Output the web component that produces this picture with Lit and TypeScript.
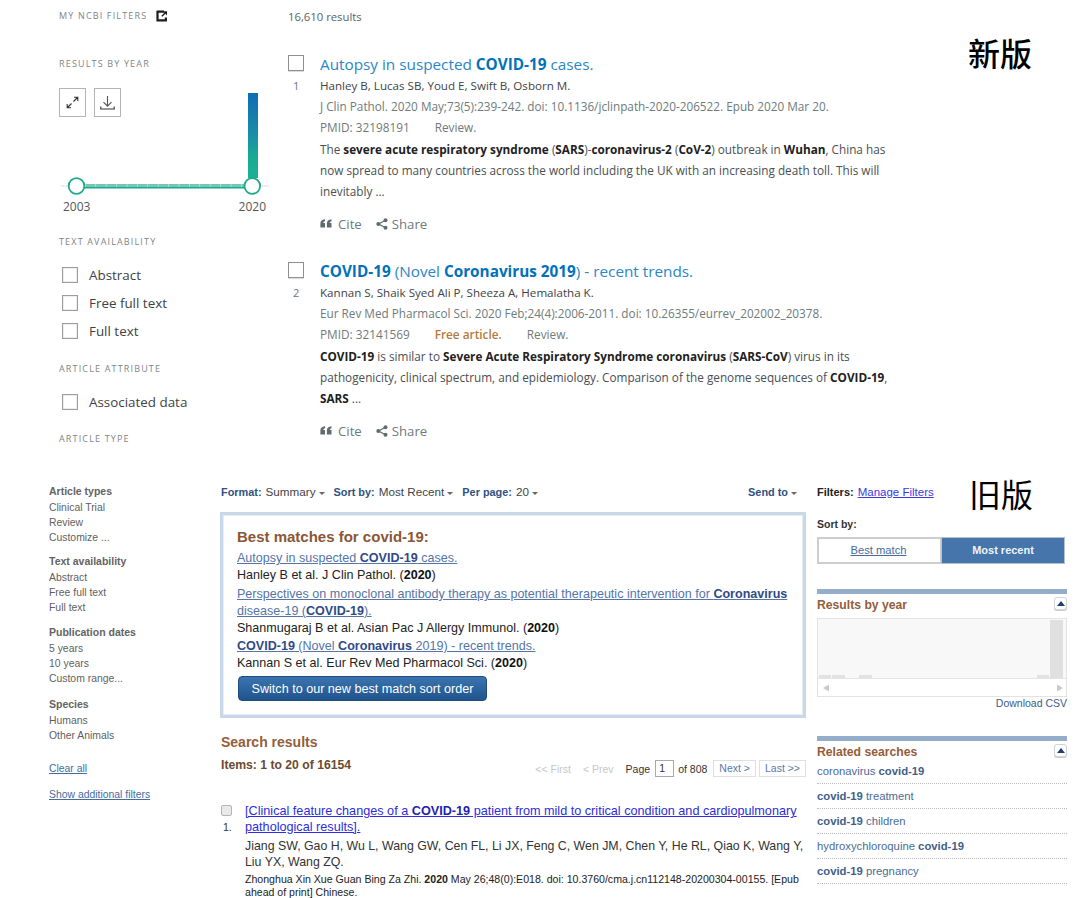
import { LitElement, html, css, svg } from "lit";
import { customElement } from "lit/decorators.js";

const extIcon = html`<svg class="ext" width="12" height="12" viewBox="0 0 12 12"><path d="M1 0.5h7v2.2H3a.4.4 0 0 0-.4.4v6.1h6.2V7.6H11V11a.6.6 0 0 1-.6.6H1a.6.6 0 0 1-.6-.6V1.1A.6.6 0 0 1 1 .5z" fill="#1c1c1c"/><path d="M5 8l3-3-1.6-1.600h4.200V7.600L9 6 6 9z" fill="#1c1c1c" transform="translate(.4 -2.200)"/></svg>`;
const expandIcon = html`<svg width="13" height="13" viewBox="0 0 13 13"><path d="M7.500 5.500L11.500 1.500M8 1.200h3.800V5M5.500 7.500L1.500 11.500M1.200 8v3.800H5" fill="none" stroke="#333" stroke-width="1.100"/></svg>`;
const dlIcon = html`<svg width="15" height="16" viewBox="0 0 15 16"><path d="M7.500 1v10M3.500 7.200l4 4 4-4" fill="none" stroke="#555" stroke-width="1.100"/><path d="M.8 11.500v2.500h13.400v-2.500" fill="none" stroke="#333" stroke-width="1.100"/></svg>`;
const quoteIcon = html`<svg width="12" height="9" viewBox="0 0 12 9"><path d="M5 .3v2C3.800 2.600 3.300 3.200 3.200 4H5v4.500H.4V4.600C.4 2 2 .6 5 .3zM11.500.3v2c-1.200.3-1.700.9-1.800 1.700h1.800v4.500H6.900V4.600C6.900 2 8.500.6 11.500.3z" fill="#5f6b6f"/></svg>`;
const shareIcon = html`<svg width="12" height="12" viewBox="0 0 12 12"><path d="M9.500 2.300L2.500 6l7 3.700" fill="none" stroke="#5f6b6f" stroke-width="1.200"/><circle cx="9.500" cy="2.300" r="2" fill="#5f6b6f"/><circle cx="2.300" cy="6" r="2" fill="#5f6b6f"/><circle cx="9.500" cy="9.700" r="2" fill="#5f6b6f"/></svg>`;

const toggle = html`<span class="toggle"><svg width="8" height="5" viewBox="0 0 8 5"><path d="M0 5L4 0l4 5z" fill="#1f3f73"/></svg></span>`;

const caret = html`<span class="caret"></span>`;

const ticks = Array.from({ length: 17 }, (_, i) => 26 + i * 10.4);

@customElement("app-root")
export class AppRoot extends LitElement {
  static styles = css`
    :host { display: block; width: 1080px; height: 898px; overflow: hidden; background: #fff; }
    * { box-sizing: border-box; }
    a { text-decoration: none; color: inherit; }
    .new { display: flex; height: 460px; font-family: "Open Sans", sans-serif; color: #3d4346; }
    .side { width: 288px; padding-left: 59px; flex: none; }
    .cap { font-size: 9px; letter-spacing: 1.16px; color: #7f8487; height: 20px; line-height: 22px; text-transform: uppercase; white-space: nowrap; }
    .cap.first { height: 30px; line-height: 32px; padding-top: 1px; display: flex; align-items: center; gap: 9px; }
    .cap.y { margin-top: 23px; }
    .chart { position: relative; margin-top: 15px; width: 215px; height: 109px; }
    .chart-svg { position: absolute; left: 0; top: 0; }
    .btns { display: flex; gap: 8px; position: relative; }
    .ibtn { width: 27px; height: 29px; border: 1px solid #b4b4b4; background: #fff; display: flex; align-items: center; justify-content: center; }
    .yrs { display: flex; justify-content: space-between; width: 207px; padding-left: 4px; font-size: 12px; line-height: 20px; height: 20px; color: #555; }
    .cap.ta { margin-top: 14px; }
    .cap.g { margin-top: 13px; }
    .cap.at { margin-top: 12px; }
    .chk { display: flex; align-items: center; height: 28px; padding-left: 3px; font-size: 13.400px; color: #3e4244; white-space: nowrap; }
    .chk.lead { margin-top: 10px; }
    .box { width: 16px; height: 16px; border: 1px solid #9d9d9d; background: #fff; flex: none; margin-right: 11px; box-shadow: inset 0 0 0 .5px #ddd; }
    .main { width: 680px; flex: none; }
    .count { height: 34px; line-height: 34px; font-size: 11.300px; color: #5d6265; }
    .art { display: flex; margin-top: 25px; }
    .art.f { margin-top: 18px; }
    .gut { width: 32px; flex: none; position: relative; }
    .abox { width: 16px; height: 16px; border: 1px solid #8f8f8f; margin-top: 3px; margin-bottom: 7px; box-shadow: 0 1px 0 #ddd; }
    .num { font-size: 11px; text-align: left; padding-left: 5px; line-height: 16px; color: #6a7680; }
    .title { height: 23px; line-height: 25px; font-size: 15.300px; color: #2a86c8; white-space: nowrap; }
    .title b { color: #0071bc; font-weight: 700; }
    .line { height: 21px; line-height: 21px; font-size: 11.750px; white-space: nowrap; color: #4a4f52; }
    .auth { font-size: 11.600px; color: #3f4345; }
    .cit { color: #6d7b7c; }
    .meta { display: flex; gap: 25px; color: #717a79; font-size: 11.800px; }
    .free { color: #b57a3b; font-weight: 600; }
    .snip { line-height: 22px; }
    .snip b { color: #212121; font-weight: 700; }
    .acts { display: flex; align-items: center; height: 21px; margin-top: 12px; font-size: 13.200px; color: #6f797b; }
    .acts span { display: flex; align-items: center; gap: 6px; }
    .acts span + span { margin-left: 14px; gap: 4px; }
    .tag { font-family: "Noto Sans CJK SC", sans-serif; font-size: 32px; color: #000; line-height: 1; white-space: nowrap; }
    .tag.a { padding-top: 36px; font-weight: 500; }

    .old { display: flex; height: 438px; font-family: "Liberation Sans", Arial, sans-serif; font-size: 11.500px; color: #333; padding-left: 49px; padding-top: 23px; }
    .fil { width: 172px; flex: none; color: #5f5f5f; font-size: 10.400px; }
    .fh { font-weight: 700; height: 17px; line-height: 16px; color: #636363; font-size: 10.500px; }
    .fi { height: 15px; line-height: 15px; }
    .fg:nth-child(2) { margin-top: 8px; }
    .fg:nth-child(3) { margin-top: 9px; }
    .fg:nth-child(4) { margin-top: 10px; }
    .lnk { height: 16px; line-height: 16px; color: #456c9e; text-decoration: underline; }
    .lnk.c { margin-top: 18px; }
    .lnk.s { margin-top: 10px; }
    .mid { width: 585px; flex: none; }
    .bar { display: flex; height: 18px; line-height: 18px; font-size: 11.700px; color: #444; white-space: nowrap; }
    .bar b { color: #2f5283; font-weight: 700; font-size: 10.900px; }
    .bar .o { margin-right: 9px; display: flex; align-items: center; }
    .bar .o b { margin-right: 4px; }
    .bar .send { margin-left: auto; margin-right: 9px; display: flex; align-items: center; }
    .caret { display: inline-block; width: 0; height: 0; border-left: 3.500px solid transparent; border-right: 3.500px solid transparent; border-top: 3.500px solid #666; margin-left: 3px; margin-top: 2px; }
    .best { margin: 11px 0 0 -1px; width: 586px; height: 206px; border: 3px solid #c9d8e8; padding: 13px 14px 0; background: #fff; box-shadow: inset 0 0 0 1px #e6edf5; color: #222; font-size: 12.550px; }
    .best h3 { margin: 0; font-size: 15px; line-height: 18px; height: 18px; color: #8a5634; font-weight: 700; }
    .row { height: 17px; line-height: 17px; white-space: nowrap; }
    .row b { font-weight: 700; color: #111; }
    .blink { color: #5574a8; text-decoration: underline; }
    .blink b { color: #2f4a86; }
    .e1 { margin-top: 4px; }
    .e2 { margin-top: 2px; }
    .e3 { margin-top: 1px; }
    .sw { display: block; margin: 4px 0 0 1px; width: 249px; height: 25px; border-radius: 4px; border: 1px solid #1f4b7f; background: linear-gradient(#3a74ae, #20548e); color: #fff; font: 12.600px/24px "Liberation Sans", Arial, sans-serif; padding: 0; text-align: center; }
    .sr { margin-top: 16px; height: 16px; line-height: 16px; font-size: 14px; font-weight: 700; color: #935e3d; }
    .pg { display: flex; justify-content: space-between; margin-top: 7px; height: 20px; }
    .items { font-weight: 700; font-size: 12.200px; color: #6b4a30; line-height: 17px; height: 16px; }
    .pgr { display: flex; align-items: center; font-size: 10.500px; margin-top: 3px; height: 17px; color: #333; white-space: nowrap; }
    .dis { color: #c6c6c6; }
    .d1 { margin-right: 12px; }
    .d2 { margin-right: 12px; }
    .of { margin-right: 6px; }
    .pbtn { border: 1px solid #e0e0e0; height: 17px; line-height: 15px; padding: 0 5px; color: #5a7aa6; }
    .pbtn.n { margin-right: 3px; }
    .pin { width: 19px; height: 17px; border: 1px solid #aaa; padding-left: 3px; line-height: 15px; margin: 0 4px 0 5px; color: #333; background: #fff; }
    .res { display: flex; margin-top: 26px; }
    .rg { width: 24px; flex: none; }
    .rc { width: 11px; height: 11px; border: 1px solid #b5b5b5; border-radius: 2px; background: #e9e9e9; margin-top: 2px; margin-bottom: 4px; }
    .rn { font-size: 10.500px; padding-left: 2px; line-height: 14px; margin-top: 3px; color: #333; }
    .rt { color: #2c2ce0; text-decoration: underline; font-size: 12.670px; line-height: 16px; white-space: nowrap; }
    .rt b { font-weight: 700; color: #1f1fb0; }
    .ra { margin-top: 3px; line-height: 16px; font-size: 12.350px; color: #333; white-space: nowrap; }
    .rj { margin-top: 3px; line-height: 13px; font-size: 10.580px; color: #222; white-space: nowrap; }
    .rj b { font-weight: 700; }
    .right { width: 250px; flex: none; margin-left: 11px; position: relative; }
    .ftop { height: 18px; line-height: 18px; font-size: 11px; display: flex; gap: 4px; white-space: nowrap; }
    .ftop b { font-weight: 700; color: #222; }
    .ftop a { color: #3a3ae0; text-decoration: underline; font-size: 11.500px; }
    .tag.b { position: absolute; left: 152px; top: -6px; font-weight: 400; }
    .sortl { margin-top: 15px; height: 16px; line-height: 16px; font-weight: 700; font-size: 10.500px; color: #333; }
    .seg { display: flex; margin-top: 5px; width: 248px; height: 27px; font-size: 11.200px; line-height: 23px; text-align: center; }
    .seg div { border: 2px solid #cdcdcd; }
    .seg .l { width: 124px; padding-right: 2px; color: #456c9e; text-decoration: underline; background: #fff; border-right: 1px solid #cdcdcd; }
    .seg .r { flex: 1; background: #4575aa; color: #eef3f8; font-weight: 700; border-color: #b8c2cc; border-width: 1px; line-height: 25px; font-size: 11px; }
    .rule { height: 5px; background: #93adca; }
    .rule.a { margin-top: 25px; }
    .rule.c { margin-top: 25px; }
    .pt { display: flex; justify-content: space-between; height: 16px; line-height: 17px; font-weight: 700; font-size: 12.200px; color: #955c38; margin-top: 3px; }
    .toggle { width: 13px; height: 13px; border: 1px solid #d4d4d4; border-radius: 3px; background: #fff; display: flex; align-items: center; justify-content: center; box-shadow: 0 1px 0 #ccc; }
    .plot { margin-top: 5px; width: 250px; height: 79px; border: 1px solid #e3e3e3; display: block; }
    .csv { height: 14px; line-height: 13px; text-align: right; font-size: 10.500px; color: #3a5d86; }
    .rs { height: 25px; padding-bottom: 2px; border-bottom: 1px dotted #bbb; line-height: 24px; font-size: 11.300px; color: #4b6c97; white-space: nowrap; }
    .rs b { font-weight: 700; color: #3f5f8a; }
    .rsw { margin-top: -1px; }
  `;

  private chk(t: string, lead = false) {
    return html`<div class="chk ${lead ? "lead" : ""}"><span class="box"></span>${t}</div>`;
  }

  private group(h: string, items: string[]) {
    return html`<div class="fg"><div class="fh">${h}</div>${items.map((i) => html`<div class="fi">${i}</div>`)}</div>`;
  }

  render() {
    const plotBars = [[1, 12], [14, 13], [41, 13], [219, 12]];
    return html`
      <section class="new">
        <aside class="side">
          <div class="cap first">My NCBI Filters ${extIcon}</div>
          <div class="cap y">Results by year</div>
          <div class="chart">
            <svg class="chart-svg" width="215" height="109" viewBox="0 0 215 109">
              <defs><linearGradient id="g" x1="0" x2="0" y1="0" y2="1"><stop offset="0" stop-color="#0f6cb4"/><stop offset=".5" stop-color="#1b8ea6"/><stop offset=".75" stop-color="#18ab93"/><stop offset="1" stop-color="#1cb193"/></linearGradient></defs>
              <rect x="189" y="5" width="10" height="85" fill="url(#g)"/>
              <rect x="2" y="97.500" width="208" height="1" fill="#ddd"/>
              <rect x="17" y="96" width="177" height="3" fill="#72c9b3"/>
              <rect x="17" y="99" width="177" height="1.500" fill="#1fa88b"/>
              ${ticks.map((x) => svg`<rect x=${x} y="96" width=".7" height="3" fill="#bfe6dc"/>`)}
              <circle cx="17.500" cy="98" r="7.800" fill="#fff" stroke="#1fa88b" stroke-width="1.800"/>
              <circle cx="193.300" cy="98" r="7.800" fill="#fff" stroke="#1fa88b" stroke-width="1.800"/>
            </svg>
            <div class="btns"><span class="ibtn">${expandIcon}</span><span class="ibtn">${dlIcon}</span></div>
          </div>
          <div class="yrs"><span>2003</span><span>2020</span></div>
          <div class="cap ta">Text availability</div>
          ${this.chk("Abstract", true)}${this.chk("Free full text")}${this.chk("Full text")}
          <div class="cap g">Article attribute</div>
          ${this.chk("Associated data", true)}
          <div class="cap at">Article type</div>
        </aside>
        <div class="main">
          <div class="count">16,610 results</div>
          <article class="art f">
            <div class="gut"><div class="abox"></div><div class="num">1</div></div>
            <div>
              <div class="title">Autopsy in suspected <b>COVID-19</b> cases.</div>
              <div class="line auth">Hanley B, Lucas SB, Youd E, Swift B, Osborn M.</div>
              <div class="line cit">J Clin Pathol. 2020 May;73(5):239-242. doi: 10.1136/jclinpath-2020-206522. Epub 2020 Mar 20.</div>
              <div class="line meta"><span>PMID: 32198191</span><span>Review.</span></div>
              <div class="line snip">The <b>severe acute respiratory syndrome</b> (<b>SARS</b>)-<b>coronavirus-2</b> (<b>CoV-2</b>) outbreak in <b>Wuhan</b>, China has</div>
              <div class="line snip">now spread to many countries across the world including the UK with an increasing death toll. This will</div>
              <div class="line snip">inevitably ...</div>
              <div class="acts"><span>${quoteIcon} Cite</span><span>${shareIcon} Share</span></div>
            </div>
          </article>
          <article class="art">
            <div class="gut"><div class="abox"></div><div class="num">2</div></div>
            <div>
              <div class="title"><b>COVID-19</b> (Novel <b>Coronavirus 2019</b>) - recent trends.</div>
              <div class="line auth">Kannan S, Shaik Syed Ali P, Sheeza A, Hemalatha K.</div>
              <div class="line cit">Eur Rev Med Pharmacol Sci. 2020 Feb;24(4):2006-2011. doi: 10.26355/eurrev_202002_20378.</div>
              <div class="line meta"><span>PMID: 32141569</span><span class="free">Free article.</span><span>Review.</span></div>
              <div class="line snip"><b>COVID-19</b> is similar to <b>Severe Acute Respiratory Syndrome coronavirus</b> (<b>SARS-CoV</b>) virus in its</div>
              <div class="line snip">pathogenicity, clinical spectrum, and epidemiology. Comparison of the genome sequences of <b>COVID-19</b>,</div>
              <div class="line snip"><b>SARS</b> ...</div>
              <div class="acts"><span>${quoteIcon} Cite</span><span>${shareIcon} Share</span></div>
            </div>
          </article>
        </div>
        <div class="tag a">新版</div>
      </section>
      <section class="old">
        <aside class="fil">
          ${this.group("Article types", ["Clinical Trial", "Review", "Customize ..."])}
          ${this.group("Text availability", ["Abstract", "Free full text", "Full text"])}
          ${this.group("Publication dates", ["5 years", "10 years", "Custom range..."])}
          ${this.group("Species", ["Humans", "Other Animals"])}
          <div class="lnk c">Clear all</div>
          <div class="lnk s">Show additional filters</div>
        </aside>
        <div class="mid">
          <div class="bar">
            <span class="o"><b>Format:</b> Summary ${caret}</span>
            <span class="o"><b>Sort by:</b> Most Recent ${caret}</span>
            <span class="o"><b>Per page:</b> 20 ${caret}</span>
            <span class="send"><b>Send to</b> ${caret}</span>
          </div>
          <div class="best">
            <h3>Best matches for covid-19:</h3>
            <div class="e1">
              <div class="row blink">Autopsy in suspected <b>COVID-19</b> cases.</div>
              <div class="row">Hanley B et al. J Clin Pathol. (<b>2020</b>)</div>
            </div>
            <div class="e2">
              <div class="row blink">Perspectives on monoclonal antibody therapy as potential therapeutic intervention for <b>Coronavirus</b></div>
              <div class="row blink">disease-19 (<b>COVID-19</b>).</div>
              <div class="row">Shanmugaraj B et al. Asian Pac J Allergy Immunol. (<b>2020</b>)</div>
            </div>
            <div class="e3">
              <div class="row blink"><b>COVID-19</b> (Novel <b>Coronavirus</b> 2019) - recent trends.</div>
              <div class="row">Kannan S et al. Eur Rev Med Pharmacol Sci. (<b>2020</b>)</div>
            </div>
            <button class="sw">Switch to our new best match sort order</button>
          </div>
          <div class="sr">Search results</div>
          <div class="pg">
            <div class="items">Items: 1 to 20 of 16154</div>
            <div class="pgr">
              <span class="dis d1">&lt;&lt; First</span>
              <span class="dis d2">&lt; Prev</span>
              <span>Page</span><span class="pin">1</span><span class="of">of 808</span>
              <span class="pbtn n">Next &gt;</span><span class="pbtn">Last &gt;&gt;</span>
            </div>
          </div>
          <div class="res">
            <div class="rg"><div class="rc"></div><div class="rn">1.</div></div>
            <div>
              <div class="rt">[Clinical feature changes of a <b>COVID-19</b> patient from mild to critical condition and cardiopulmonary</div>
              <div class="rt">pathological results].</div>
              <div class="ra">Jiang SW, Gao H, Wu L, Wang GW, Cen FL, Li JX, Feng C, Wen JM, Chen Y, He RL, Qiao K, Wang Y,<br />Liu YX, Wang ZQ.</div>
              <div class="rj">Zhonghua Xin Xue Guan Bing Za Zhi. <b>2020</b> May 26;48(0):E018. doi: 10.3760/cma.j.cn112148-20200304-00155. [Epub<br />ahead of print] Chinese.</div>
            </div>
          </div>
        </div>
        <aside class="right">
          <div class="ftop"><b>Filters:</b> <a>Manage Filters</a></div>
          <div class="tag b">旧版</div>
          <div class="sortl">Sort by:</div>
          <div class="seg"><div class="l">Best match</div><div class="r">Most recent</div></div>
          <div class="rule a"></div>
          <div class="pt"><span>Results by year</span>${toggle}</div>
          <svg class="plot" width="250" height="79" viewBox="0 0 248 77">
            <rect width="248" height="59" fill="#f8f8f8"/>
            <rect y="59" width="248" height="1" fill="#e3e3e3"/>
            ${plotBars.map(([x, w]) => svg`<rect x=${x} y="56" width=${w} height="3" fill="#e2e2e2"/>`)}
            <rect x="232" y="1" width="13" height="58" fill="#e0e0e0"/>
            <path d="M5 69l6-3.500v7zM245 69l-6-3.500v7z" fill="#c9c9c9"/>
          </svg>
          <div class="csv">Download CSV</div>
          <div class="rule c"></div>
          <div class="pt"><span>Related searches</span>${toggle}</div>
          <div class="rsw">
            <div class="rs">coronavirus <b>covid-19</b></div>
            <div class="rs"><b>covid-19</b> treatment</div>
            <div class="rs"><b>covid-19</b> children</div>
            <div class="rs">hydroxychloroquine <b>covid-19</b></div>
            <div class="rs"><b>covid-19</b> pregnancy</div>
          </div>
        </aside>
      </section>
    `;
  }
}
